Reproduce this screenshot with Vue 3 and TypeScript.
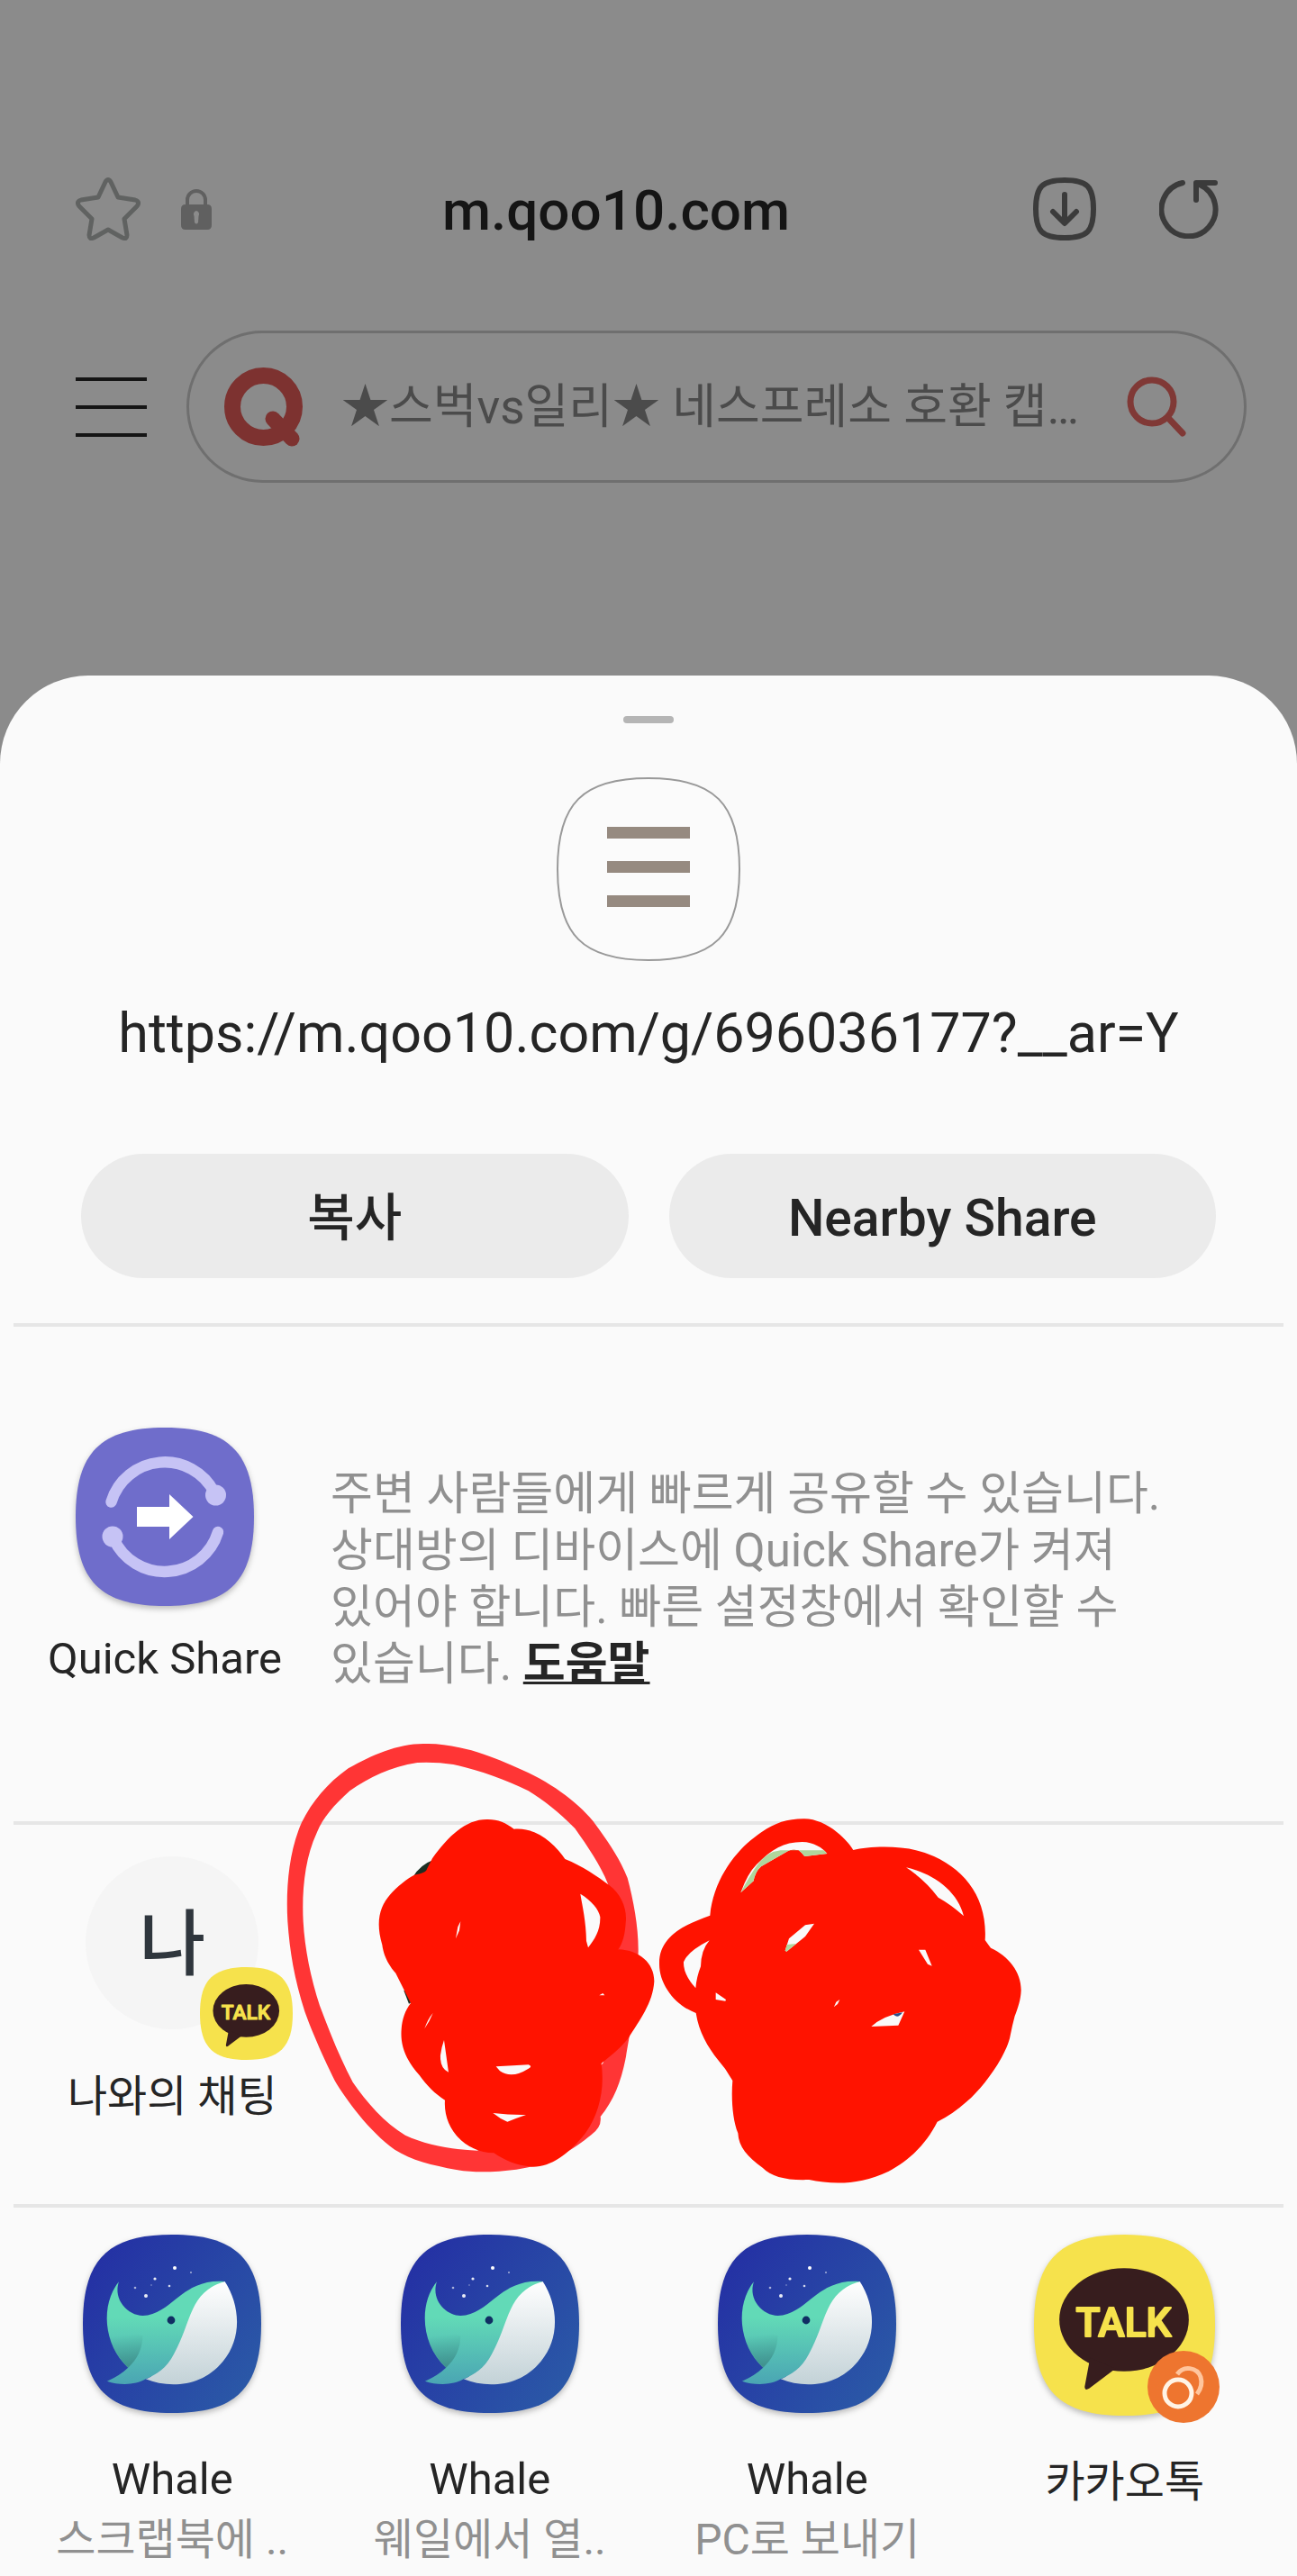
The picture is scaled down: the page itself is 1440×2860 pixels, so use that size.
<script setup lang="ts">
import { ref } from 'vue'

interface ShareTarget {
  id: string
  icon: 'whale' | 'talk'
  size: number
  lang: 'en' | 'ko'
  name: string
  detail?: string
}

const pageHost = 'm.qoo10.com'
const shareUrl = 'https://m.qoo10.com/g/696036177?__ar=Y'
const query = ref('')

const targets: ShareTarget[] = [
  { id: 'scrap', icon: 'whale', size: 198, lang: 'en', name: 'Whale', detail: '스크랩북에 ..' },
  { id: 'open', icon: 'whale', size: 198, lang: 'en', name: 'Whale', detail: '웨일에서 열..' },
  { id: 'pc', icon: 'whale', size: 198, lang: 'en', name: 'Whale', detail: 'PC로 보내기' },
  { id: 'talk', icon: 'talk', size: 201, lang: 'ko', name: '카카오톡' },
]
</script>

<template>
  <div class="screen">
    <!-- Shared icon artwork -->
    <svg class="defs" aria-hidden="true">
      <defs>
        <linearGradient id="sea" x1="0" y1="0.2" x2="1" y2="0.9">
          <stop offset="0" stop-color="#2430a4" />
          <stop offset="1" stop-color="#2b5ba7" />
        </linearGradient>
        <linearGradient id="skin" x1="0" y1="0" x2="0" y2="1">
          <stop offset="0.35" stop-color="#62dab7" />
          <stop offset="1" stop-color="#4aa5b3" />
        </linearGradient>
        <linearGradient id="belly" x1="0" y1="0" x2="0" y2="1">
          <stop offset="0" stop-color="#ffffff" />
          <stop offset="1" stop-color="#c3d2d7" />
        </linearGradient>
        <linearGradient id="tail" x1="0.5" y1="0" x2="0.6" y2="1">
          <stop offset="0.2" stop-color="#3f9a8c" stop-opacity="0" />
          <stop offset="1" stop-color="#3f8f8c" />
        </linearGradient>
        <symbol id="squircle" viewBox="0 0 200 200">
          <path d="M100 0C172 0 200 28 200 100S172 200 100 200S0 172 0 100S28 0 100 0Z" />
        </symbol>
        <symbol id="whale" viewBox="0 0 198 198">
          <use href="#squircle" width="198" height="198" fill="url(#sea)" />
          <g fill="#fff">
            <circle cx="102" cy="37" r="2" />
            <circle cx="120" cy="42" r="1" opacity=".6" />
            <circle cx="80" cy="49" r="1.6" opacity=".9" />
            <circle cx="96" cy="57" r="1.3" opacity=".8" />
            <circle cx="58" cy="59" r="1.3" opacity=".6" />
            <circle cx="70" cy="68" r="2" opacity=".9" />
            <circle cx="76" cy="56" r="1" opacity=".3" />
          </g>
          <g transform="scale(.4082 .3333) translate(-127 -123)">
            <path fill="url(#belly)" d="M513 279C556 360 560 470 508 545C450 632 360 635 298 604C350 590 370 400 440 320Q470 285 513 279Z" />
            <path fill="url(#skin)" d="M225 280C208 340 250 393 290 393C370 390 395 268 513 279C415 315 425 410 375 520C355 570 325 590 298 604C270 625 225 625 193 611Q228 592 250 566C182 490 175 355 225 280Z" />
            <path fill="url(#tail)" d="M193 430Q240 440 290 460Q288 525 250 566Q202 510 193 430Z" />
          </g>
          <circle cx="98" cy="95" r="4.4" fill="#102e63" />
        </symbol>
        <symbol id="talk" viewBox="0 0 200 200">
          <use href="#squircle" width="200" height="200" fill="#f6e24c" />
          <ellipse cx="99.500" cy="94" rx="71.500" ry="57" fill="#371d1e" />
          <path d="M62 136L56 168Q56 173 61 170L90 148Z" fill="#371d1e" />
          <text x="99" y="112" class="talk-text" text-anchor="middle">TALK</text>
        </symbol>
      </defs>
    </svg>

    <header class="page">
      <div class="bar">
        <button class="plain" aria-label="Bookmark">
          <svg width="72" height="70" viewBox="0 0 72 70" fill="none" stroke="#606261" stroke-width="5" stroke-linejoin="round">
            <path d="M33 5Q36 0 39 5L47 22L66 25Q72 27 68 32L54 46L57 64Q57 69 52 67L36 58L20 67Q15 69 15 64L18 46L4 32Q0 27 6 25L25 22Z" />
          </svg>
        </button>
        <svg class="lock" width="34" height="46" viewBox="0 0 34 46">
          <path d="M7 21V13A10 10 0 0 1 27 13V21" fill="none" stroke="#606060" stroke-width="4" />
          <path fill="#606060" fill-rule="evenodd" d="M5 18H29Q34 18 34 23V41Q34 46 29 46H5Q0 46 0 41V23Q0 18 5 18ZM17 25A4 4 0 0 0 14.500 31L15 38Q17 41 19 38L19.500 31A4 4 0 0 0 17 25Z" />
        </svg>
        <h1 class="host">{{ pageHost }}</h1>
        <button class="plain" aria-label="Download">
          <svg width="70" height="70" viewBox="0 0 70 70" fill="none" stroke="#3b3b3b" stroke-width="6" stroke-linecap="round" stroke-linejoin="round">
            <path d="M35 3C60 3 67 10 67 35S60 67 35 67S3 60 3 35S10 3 35 3ZM35 19V50M22 38L35 51L48 38" />
          </svg>
        </button>
        <button class="plain reload" aria-label="Reload">
          <svg width="66" height="66" viewBox="0 0 66 66" fill="none" stroke="#3b3b3b" stroke-width="6" stroke-linecap="round" stroke-linejoin="round">
            <path d="M26 4A30 30 0 1 0 45 6M62 4H41V23" />
          </svg>
        </button>
      </div>
      <div class="search-row">
        <button class="plain menu" aria-label="Menu"><i></i><i></i><i></i></button>
        <form class="search" @submit.prevent>
          <svg width="88" height="88" viewBox="0 0 88 88" fill="none" stroke="#7d3230" stroke-linecap="round">
            <circle cx="43.500" cy="43.500" r="34.500" stroke-width="18" />
            <path d="M54 57L75 79" stroke-width="17" />
          </svg>
          <input v-model="query" type="text" aria-label="Search" placeholder="★스벅vs일리★ 네스프레소 호환 캡…" />
          <button class="plain" aria-label="Search">
            <svg width="68" height="68" viewBox="0 0 68 68" fill="none" stroke="#803936" stroke-width="7" stroke-linecap="round">
              <circle cx="28" cy="28" r="24" />
              <path d="M46 46L62 63" />
            </svg>
          </button>
        </form>
      </div>
    </header>

    <main class="sheet">
      <div class="handle"></div>
      <svg class="preview" width="204" height="204" viewBox="0 0 204 204">
        <path d="M102 1C175 1 203 29 203 102S175 203 102 203S1 175 1 102S29 1 102 1Z" fill="#fbfbfb" stroke="#999" stroke-width="2" />
        <path d="M56 55H148V68H56ZM56 93H148V106H56ZM56 131H148V144H56Z" fill="#968a80" />
      </svg>
      <p class="url">{{ shareUrl }}</p>
      <div class="actions">
        <button>복사</button>
        <button>Nearby Share</button>
      </div>

      <section class="quick">
        <button class="plain quick-app">
          <svg class="shadow" width="198" height="198" viewBox="0 0 198 198">
            <use href="#squircle" width="198" height="198" fill="#6f6dcb" />
            <g fill="none" stroke="#c6c3f5" stroke-width="12.500" stroke-linecap="round">
              <path d="M39.500 82.500A62 62 0 0 1 154 72" />
              <path d="M42 123A62 62 0 0 0 158 116" />
            </g>
            <circle cx="155.500" cy="75" r="11.500" fill="#c6c3f5" />
            <circle cx="41" cy="121" r="11.500" fill="#c6c3f5" />
            <path d="M68 88H104V74L130.500 99L104 124V110H68Z" fill="#fff" />
          </svg>
          <span class="name">Quick Share</span>
        </button>
        <p class="hint">
          주변 사람들에게 빠르게 공유할 수 있습니다.<br />
          상대방의 디바이스에 Quick Share가 켜져<br />
          있어야 합니다. 빠른 설정창에서 확인할 수 있습니다.
          <a href="#help">도움말</a>
        </p>
      </section>

      <section class="contacts">
        <button class="plain contact">
          <span class="avatar">
            나
            <svg class="avatar-badge" width="103" height="103"><use href="#talk" width="103" height="103" /></svg>
          </span>
          <span class="name" lang="ko">나와의 채팅</span>
        </button>
        <!-- Marker strokes over the remaining contacts -->
        <svg class="marker" viewBox="0 1920 1440 520" aria-hidden="true">
          <g transform="translate(310 1920) scale(.33333)">
            <path fill="#ff3535" fill-rule="evenodd" d="M490 48C540 47 590 58 640 70C700 88 740 105 790 127C900 172 990 240 1045 305C1085 360 1130 420 1160 495C1180 570 1197 660 1196 740C1190 900 1165 1030 1155 1090C1140 1170 1115 1235 1070 1290Q1075 1325 1040 1350C980 1400 900 1450 790 1466C720 1475 650 1478 590 1467C510 1452 440 1435 385 1400C300 1340 220 1230 185 1170C150 1100 110 1010 85 940C50 830 35 740 28 640C22 540 30 410 75 310C110 240 160 180 230 130C310 85 400 45 490 48ZM460 111C370 125 300 160 235 205C180 255 145 295 125 345C85 430 75 540 80 640C85 730 105 830 135 920C165 1000 200 1090 245 1175C290 1240 350 1310 420 1352C490 1385 580 1400 660 1403L900 1300L1080 1110L1130 730L1095 515C1070 450 1020 380 985 330C930 275 880 235 830 205C750 165 660 135 580 117Q520 108 460 111Z" />
            <path fill="#1c2f23" d="M515 434Q470 450 445 492L500 480ZM415 870L432 914L446 905L425 870Z" />
            <path fill="#ff1300" fill-rule="evenodd" d="M695 300C730 300 755 312 782 332C860 325 920 385 952 432C1010 455 1060 490 1100 520C1140 550 1160 600 1154 645C1152 680 1145 710 1130 733C1200 735 1250 780 1249 840C1245 910 1200 970 1165 1025C1140 1060 1105 1085 1073 1113C1085 1200 1065 1280 1020 1345C960 1420 900 1460 840 1457C790 1453 750 1435 715 1411C620 1410 545 1330 552 1235C520 1215 490 1185 467 1152C420 1100 403 1050 407 1000C409 965 420 935 438 912L388 812C350 770 345 730 343 718C320 640 335 590 370 550C390 525 430 495 450 485C475 480 490 475 492 465L510 430C560 360 620 298 695 300ZM1003 548C1040 570 1065 600 1069 625C1070 670 1050 700 1029 727L1023 705C1022 640 1010 590 1003 548ZM722 1123Q780 1120 830 1117Q845 1122 830 1130Q775 1165 735 1138ZM712 1278Q770 1285 822 1284Q790 1295 760 1307Q735 1297 712 1278ZM549 1035L564 1142Q535 1130 537 1085Q540 1060 549 1035ZM604 640L600 670L588 697L595 658ZM512 945Q495 965 484 997Q500 975 512 945ZM1066 886L1078 879L1084 886Z" />
          </g>
          <g transform="translate(720 1990) scale(.33333)">
            <path fill="#ff1300" fill-rule="evenodd" d="M520 88C580 88 650 140 682 192C740 178 860 175 930 205C1050 250 1130 350 1121 492Q1130 505 1140 518C1200 545 1242 600 1241 660C1240 690 1230 720 1220 745Q1212 775 1205 810C1195 870 1120 980 1060 1030Q1010 1075 962 1097C920 1180 860 1230 800 1262C700 1310 610 1305 535 1290C460 1293 410 1280 380 1250C330 1215 300 1180 298 1135C280 1090 275 1020 280 960L255 920C205 860 170 810 158 735C90 710 35 640 36 570C35 480 120 440 205 410C215 300 280 210 340 160C400 110 450 87 520 88ZM307 334Q330 270 360 240C410 190 450 165 512 165C550 165 580 185 595 204L520 213Q510 200 500 193Q480 188 465 195L375 247Q355 265 350 295ZM552 437L522 480L460 530L455 527L468 487L522 442ZM858 250C950 270 1030 330 1050 412Q1010 375 965 350Q920 290 858 250ZM900 524L922 524L944 578L930 572ZM203 493Q175 525 174 580Q160 615 157 652Q115 605 117 565Q130 530 203 493ZM224 667L258 690L256 695L224 690ZM742 780Q780 745 853 730L832 776ZM637 690L630 705L618 714L625 698Z" />
            <path fill="#b0d69c" d="M307 334Q335 280 360 245Q385 210 415 198L440 193H584L595 204L520 213Q510 200 500 193Q480 188 465 195L375 247Q355 265 350 295ZM460 530L455 527L461 507L492 504Z" />
            <path fill="#2c4f8a" d="M815 739Q830 756 846 733Z" />
          </g>
        </svg>
      </section>

      <section class="apps">
        <button v-for="t in targets" :key="t.id" class="plain app">
          <span class="app-icon">
            <svg class="shadow" :width="t.size" :height="t.size">
              <use :href="'#' + t.icon" :width="t.size" :height="t.size" />
            </svg>
            <svg v-if="t.icon === 'talk'" class="app-badge" width="80" height="80" viewBox="0 0 80 80" fill="none">
              <circle cx="40" cy="40" r="40" fill="#ee752f" />
              <path d="M33 26C40 16 55 18 59 29Q62 39 55 48" stroke="#ffc59d" stroke-width="5" />
              <circle cx="34" cy="47" r="15" stroke="#fff4e6" stroke-width="5" />
            </svg>
          </span>
          <span class="name" :lang="t.lang">{{ t.name }}</span>
          <span v-if="t.detail" class="detail">{{ t.detail }}</span>
        </button>
      </section>
    </main>
  </div>
</template>

<style>
body {
  margin: 0;
  background: #fafafa;
}
</style>

<style scoped>
.screen {
  background: #8b8b8b;
  font-family: Roboto, "Noto Sans CJK KR", sans-serif;
  color: #252525;
  overflow: hidden;
}
.defs {
  position: absolute;
  width: 0;
  height: 0;
}
svg {
  display: block;
  flex: none;
}
.plain {
  padding: 0;
  border: 0;
  background: none;
  font: inherit;
  color: inherit;
}
.page {
  padding: 197px 56px 214px 84px;
}
.bar {
  display: flex;
  align-items: center;
  height: 70px;
  padding-right: 31px;
}
.lock {
  margin-left: 45px;
}
.host {
  flex: 1;
  margin: 0;
  padding: 4px 14px 0 0;
  font-size: 62px;
  line-height: 80px;
  font-weight: 500;
  text-align: center;
  color: #151515;
}
.reload {
  margin-left: 70px;
}
.search-row {
  display: flex;
  align-items: center;
  gap: 44px;
  margin-top: 100px;
}
.menu {
  display: flex;
  flex-direction: column;
  gap: 27px;
  width: 79px;
}
.menu i {
  height: 4px;
  background: #151515;
}
.search {
  box-sizing: border-box;
  display: flex;
  flex: 1;
  align-items: center;
  height: 169px;
  padding: 0 62px 0 39px;
  border: 3px solid #6f6f6f;
  border-radius: 85px;
}
.search input {
  flex: 1;
  min-width: 0;
  margin: 0 20px 0 42px;
  padding: 0;
  border: 0;
  outline: 0;
  background: none;
  font: 53px/80px Roboto, "Noto Sans CJK KR", sans-serif;
  color: #4b4b4b;
}
.search input::placeholder {
  color: #4b4b4b;
  opacity: 1;
}
.sheet {
  padding: 45px 15px 0;
  border-radius: 98px 98px 0 0;
  background: #fafafa;
}
.handle {
  width: 56px;
  height: 8px;
  margin: 0 auto;
  border-radius: 4px;
  background: #b5b5b5;
}
.preview {
  margin: 60px auto 0;
}
.url {
  margin: 40px 0 0;
  font-size: 61px;
  line-height: 80px;
  text-align: center;
}
.actions {
  display: flex;
  gap: 45px;
  padding: 94px 75px 50px;
}
.actions button {
  flex: 1;
  height: 138px;
  padding: 5px 0 0;
  border: 0;
  border-radius: 69px;
  background: #ebebeb;
  font: 500 57px/80px Roboto, "Noto Sans CJK KR", sans-serif;
  color: #252525;
}
.quick,
.contacts,
.apps {
  border-top: 4px solid #e6e6e6;
}
.quick {
  display: flex;
  gap: 54px;
  padding: 112px 60px 143px 38px;
}
.quick-app {
  display: flex;
  flex: none;
  flex-direction: column;
  align-items: center;
  gap: 29px;
  width: 260px;
}
.shadow {
  overflow: visible;
  filter: drop-shadow(0 3px 3px rgba(0, 0, 0, 0.25));
}
.name,
.detail {
  font-size: 49px;
  line-height: 60px;
  white-space: nowrap;
}
.detail,
.name:lang(ko) {
  font-size: 48px;
}
.hint {
  flex: 1;
  margin: 42px 0 0;
  font-size: 51px;
  line-height: 63px;
  color: #909090;
  word-break: keep-all;
}
.hint a {
  display: inline-block;
  color: #252525;
  font-weight: 700;
  text-decoration-thickness: 3px;
}
.contacts {
  position: relative;
  display: grid;
  grid-template-columns: repeat(4, 1fr);
  padding: 35px 0 89px;
}
.contact,
.app {
  display: flex;
  flex-direction: column;
  align-items: center;
}
.contact {
  gap: 45px;
}
.avatar {
  position: relative;
  width: 192px;
  height: 192px;
  border-radius: 50%;
  background: #f5f5f5;
  font-size: 80px;
  font-weight: 500;
  line-height: 196px;
  text-align: center;
  color: #2f363d;
}
.avatar-badge {
  position: absolute;
  right: -38px;
  bottom: -34px;
}
.marker {
  position: absolute;
  top: -106px;
  left: -15px;
  width: calc(100% + 30px);
  pointer-events: none;
}
.talk-text {
  font: 500 44px Roboto, sans-serif;
  fill: #f6e24c;
  stroke: #f6e24c;
  stroke-width: 2px;
  stroke-linejoin: round;
}
.apps {
  display: grid;
  grid-template-columns: repeat(4, 1fr);
  padding: 30px 0 10px;
}
.app-icon {
  position: relative;
  margin-bottom: 44px;
}
.app-badge {
  position: absolute;
  right: -5px;
  bottom: -8px;
}
.detail {
  margin-top: 7px;
  color: #909090;
}
</style>
